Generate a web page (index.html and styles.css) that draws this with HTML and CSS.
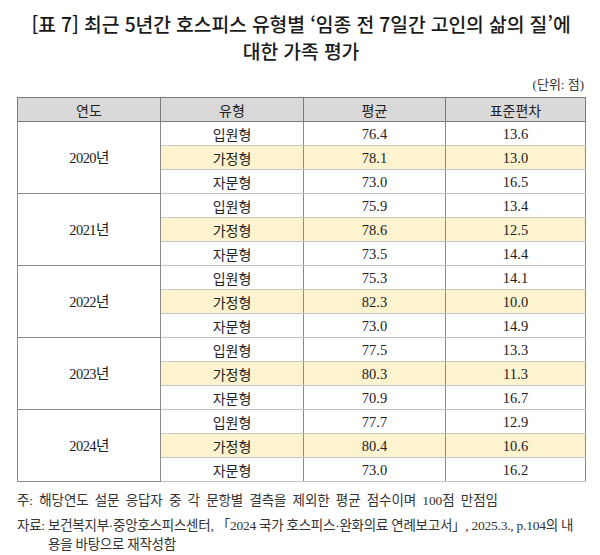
FILE: index.html
```html
<!DOCTYPE html>
<html lang="ko">
<head>
<meta charset="utf-8">
<link rel="stylesheet" href="styles.css">
</head>
<body>
<div class="page">
  <h1 class="title">[표 7] 최근 5년간 호스피스 유형별 ‘임종 전 7일간 고인의 삶의 질’에<br>대한 가족 평가</h1>
  <div class="unit">(단위: 점)</div>
  <table class="tbl">
    <colgroup><col class="c1"><col class="c2"><col class="c3"><col class="c4"></colgroup>
    <thead>
      <tr><th>연도</th><th>유형</th><th>평균</th><th>표준편차</th></tr>
    </thead>
    <tbody>
      <tr class="g"><td rowspan="3" class="yr">2020년</td><td class="k">입원형</td><td>76.4</td><td>13.6</td></tr>
      <tr class="hl"><td class="k">가정형</td><td>78.1</td><td>13.0</td></tr>
      <tr><td class="k">자문형</td><td>73.0</td><td>16.5</td></tr>
      <tr class="g"><td rowspan="3" class="yr">2021년</td><td class="k">입원형</td><td>75.9</td><td>13.4</td></tr>
      <tr class="hl"><td class="k">가정형</td><td>78.6</td><td>12.5</td></tr>
      <tr><td class="k">자문형</td><td>73.5</td><td>14.4</td></tr>
      <tr class="g"><td rowspan="3" class="yr">2022년</td><td class="k">입원형</td><td>75.3</td><td>14.1</td></tr>
      <tr class="hl"><td class="k">가정형</td><td>82.3</td><td>10.0</td></tr>
      <tr><td class="k">자문형</td><td>73.0</td><td>14.9</td></tr>
      <tr class="g"><td rowspan="3" class="yr">2023년</td><td class="k">입원형</td><td>77.5</td><td>13.3</td></tr>
      <tr class="hl"><td class="k">가정형</td><td>80.3</td><td>11.3</td></tr>
      <tr><td class="k">자문형</td><td>70.9</td><td>16.7</td></tr>
      <tr class="g"><td rowspan="3" class="yr">2024년</td><td class="k">입원형</td><td>77.7</td><td>12.9</td></tr>
      <tr class="hl"><td class="k">가정형</td><td>80.4</td><td>10.6</td></tr>
      <tr><td class="k">자문형</td><td>73.0</td><td>16.2</td></tr>
    </tbody>
  </table>
  <p class="note first">주: 해당연도 설문 응답자 중 각 문항별 결측을 제외한 평균 점수이며 100점 만점임</p>
  <p class="note src">자료: 보건복지부·중앙호스피스센터, 「2024 국가 호스피스·완화의료 연례보고서」, 2025.3., p.104의 내<br>용을 바탕으로 재작성함</p>
</div>
</body>
</html>
```
FILE: styles.css
```css
* { box-sizing: border-box; }
html, body { margin: 0; padding: 0; background: #fff; }
body { font-family: "Liberation Serif", "Noto Sans CJK KR", serif; color: #222; }
.page { width: 600px; padding: 11px 15px 0 17px; }
.title {
  margin: 0;
  text-align: center;
  font-family: "Noto Sans CJK KR", sans-serif;
  font-weight: 500;
  font-size: 19.3px;
  line-height: 27px;
  letter-spacing: -0.1px;
  color: #1a1a1a;
}
.unit {
  text-align: right;
  font-size: 13px;
  line-height: 16px;
  margin-top: 12px;
  margin-bottom: 4px;
  padding-right: 1px;
  color: #333;
}
.tbl {
  width: 568px;
  border-collapse: collapse;
  table-layout: fixed;
  border: 1px solid #7a7a7a;
}
.c1 { width: 143px; }
.c2 { width: 143px; }
.c3 { width: 142px; }
.c4 { width: 140px; }
.tbl th {
  background: #d9d9d9;
  height: 24px;
  padding: 0;
  font-family: "Noto Sans CJK KR", sans-serif;
  font-weight: 400;
  font-size: 14px;
  color: #222;
  border: 1px solid #7a7a7a;
  line-height: 20px;
}
.tbl td {
  height: 24px;
  padding: 0;
  text-align: center;
  font-size: 14.5px;
  line-height: 20px;
  border-left: 1px solid #8a8a8a;
  border-right: 1px solid #8a8a8a;
  border-top: 1px solid #c4c4c4;
  border-bottom: 1px solid #c4c4c4;
  color: #222;
}
.tbl tr.g td { border-top: 1px solid #8a8a8a; }
.tbl td.k {
  font-family: "Noto Sans CJK KR", sans-serif;
  font-size: 14px;
}
.tbl td.yr {
  font-size: 14.5px;
  letter-spacing: -0.6px;
  border-top: 1px solid #8a8a8a;
  border-bottom: 1px solid #8a8a8a;
}
.tbl tr.hl td { background: #fdf3cf; }
.note {
  margin: 0;
  font-size: 13.5px;
  line-height: 19px;
  color: #333;
  letter-spacing: -0.1px;
}
.first { margin-top: 9px; word-spacing: 3px; }
.src { margin-top: 6px; padding-left: 31px; text-indent: -31px; letter-spacing: -0.25px; white-space: nowrap; }
```
